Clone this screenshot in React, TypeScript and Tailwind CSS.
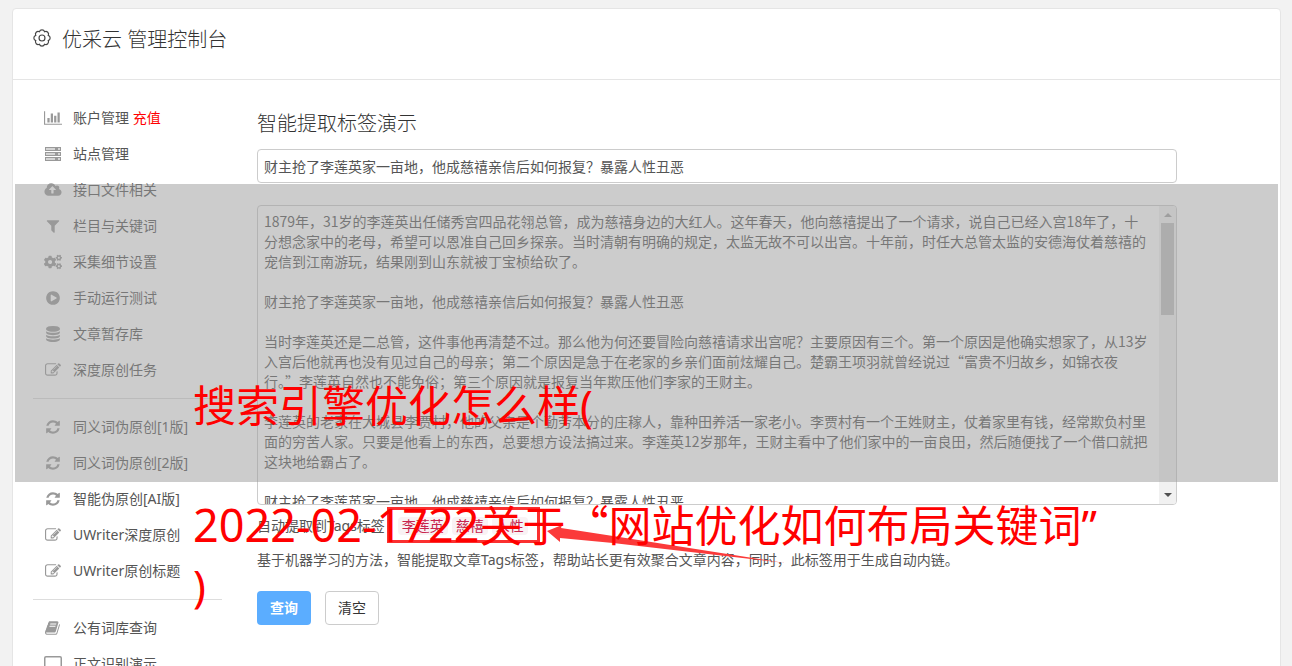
import React from 'react';
import { FaCogs } from 'react-icons/fa';

type IconProps = { box?: string; d: string; className?: string };

const Glyph: React.FC<IconProps> = ({ box = '0 0 1792 1792', d, className = 'w-4' }) => (
  <svg viewBox={box} className={`${className} h-4 shrink-0`} fill="currentColor" aria-hidden="true">
    <path d={d} />
  </svg>
);

const REFRESH = 'M1639 1056q0 5-1 7-64 268-268 434.5t-478 166.5q-146 0-282.5-55t-243.5-157l-129 129q-19 19-45 19t-45-19-19-45v-448q0-26 19-45t45-19h448q26 0 45 19t19 45-19 45l-137 137q71 66 161 102t187 36q134 0 250-65t186-179q11-17 53-117 8-23 30-23h192q13 0 22.5 9.5t9.5 22.5zm25-800v448q0 26-19 45t-45 19h-448q-26 0-45-19t-19-45 19-45l138-138q-148-137-349-137-134 0-250 65t-186 179q-11 17-53 117-8 23-30 23h-199q-13 0-22.5-9.5t-9.5-22.5v-7q65-268 270-434.5t480-166.5q146 0 284 55.5t245 156.5l130-129q19-19 45-19t45 19 19 45z';
const EDIT = 'M888 1184l116-116-152-152-116 116v56h96v96h56zm440-720q-16-16-33 1l-350 350q-17 17-1 33t33-1l350-350q17-17 1-33zm80 594v190q0 119-84.5 203.5t-203.5 84.5h-832q-119 0-203.5-84.5t-84.5-203.5v-832q0-119 84.5-203.5t203.5-84.5h832q63 0 117 25 15 7 18 23 3 17-9 29l-49 49q-14 14-32 8-23-6-45-6h-832q-66 0-113 47t-47 113v832q0 66 47 113t113 47h832q66 0 113-47t47-113v-126q0-13 9-22l64-64q15-15 35-7t20 29zm-96-738l288 288-672 672h-288v-288zm444 132l-92 92-288-288 92-92q28-28 68-28t68 28l152 152q28 28 28 68t-28 68z';
const CHART = 'M640 896v512h-256v-512h256zm384-512v1024h-256v-1024h256zm1024 1152v128h-2048v-1536h128v1408h1920zm-640-896v768h-256v-768h256zm384-384v1152h-256v-1152h256z';
const CLOUD = 'M1280 864q0-14-9-23l-352-352q-9-9-23-9t-23 9l-351 351q-10 12-10 24 0 14 9 23t23 9h224v352q0 13 9.5 22.5t22.5 9.5h192q13 0 22.5-9.5t9.5-22.5v-352h224q13 0 22.5-9.5t9.5-22.5zm640 288q0 159-112.5 271.5t-271.5 112.5h-1088q-185 0-316.5-131.5t-131.5-316.5q0-130 70-240t188-165q-2-30-2-43 0-212 150-362t362-150q156 0 285.5 87t188.5 231q71-62 166-62 106 0 181 75t75 181q0 76-41 138 130 31 213.5 135.5t83.5 238.5z';
const FILTER = 'M1595 295q17 41-14 70l-493 493v742q0 42-39 59-13 5-25 5-27 0-45-19l-256-256q-19-19-19-45v-486l-493-493q-31-29-14-70 17-39 59-39h1280q42 0 59 39z';
const PLAY = 'M896 128q209 0 385.5 103t279.5 279.5 103 385.5-103 385.5-279.5 279.5-385.5 103-385.5-103-279.5-279.5-103-385.5 103-385.5 279.5-279.5 385.5-103zm384 823q32-18 32-55t-32-55l-544-320q-31-19-64-1-32 19-32 56v640q0 37 32 56 16 8 32 8 17 0 32-9z';
const DATABASE = 'M896 768q237 0 443-43t325-127v170q0 69-103 128t-280 93.5-385 34.5-385-34.5-280-93.5-103-128v-170q119 84 325 127t443 43zm0 768q237 0 443-43t325-127v170q0 69-103 128t-280 93.5-385 34.5-385-34.5-280-93.5-103-128v-170q119 84 325 127t443 43zm0-384q237 0 443-43t325-127v170q0 69-103 128t-280 93.5-385 34.5-385-34.5-280-93.5-103-128v-170q119 84 325 127t443 43zm0-1152q208 0 385 34.5t280 93.5 103 128v128q0 69-103 128t-280 93.5-385 34.5-385-34.5-280-93.5-103-128v-128q0-69 103-128t280-93.5 385-34.5z';
const BOOK = 'M1639 478q40 57 18 129l-275 906q-19 64-76.5 107.5t-122.5 43.5h-923q-77 0-148.5-53.5t-99.5-131.5q-24-67-2-127 0-4 3-27t4-37q1-8-3-21.5t-3-19.5q2-11 8-21t16.5-23.5 16.5-23.5q23-38 45-91.5t30-91.5q3-10 .5-30t-.5-28q3-11 17-28t17-23q21-36 42-92t25-90q1-9-2.5-32t.5-28q4-13 22-30.5t22-22.5q19-26 42.5-84.5t27.5-96.5q1-8-3-25.5t-2-26.5q2-8 9-18t18-23 17-21q8-12 16.5-30.5t15-35 16-36 19.5-32 26.5-23.5 36-11.5 47.5 5.5l-1 3q38-9 51-9h761q74 0 114 56t18 130l-274 906q-36 119-71.5 153.5t-128.5 34.5h-869q-27 0-38 15-11 16-1 43 24 70 144 70h923q29 0 56-15.5t35-41.5l300-987q7-22 5-57 38 15 59 43zm-1064 2q-4 13 2 22.5t20 9.5h608q13 0 25.5-9.5t16.5-22.5l21-64q4-13-2-22.5t-20-9.5h-608q-13 0-25.5 9.5t-16.5 22.5zm-83 256q-4 13 2 22.5t20 9.5h608q13 0 25.5-9.5t16.5-22.5l21-64q4-13-2-22.5t-20-9.5h-608q-13 0-25.5 9.5t-16.5 22.5z';

const ServerIcon: React.FC = () => (
  <svg viewBox="0 0 16 14" className="h-3.5 w-4 shrink-0" aria-hidden="true">
    {[0, 5, 10].map((y) => (
      <g key={y}>
        <rect x="0" y={y} width="16" height="4" fill="#999" />
        <rect x="1" y={y + 1} width="9" height="2" fill="#d4d4d4" />
        <rect x="13" y={y + 1} width="2" height="2" fill="#d4d4d4" />
      </g>
    ))}
  </svg>
);

const LaptopIcon: React.FC = () => (
  <svg viewBox="0 0 18 16" className="h-4 w-[18px] shrink-0" fill="none" stroke="currentColor" aria-hidden="true">
    <rect x="0.75" y="0.75" width="16.5" height="11" rx="1.25" strokeWidth="1.5" />
    <path d="M5 15h8" strokeWidth="1.5" />
  </svg>
);

// scalloped gear next to the console title
const GearIcon: React.FC = () => {
  const points = Array.from({ length: 8 }, (_, i) => {
    const a = ((i * 45 + 22.5) * Math.PI) / 180;
    return `${(10 + 7.5 * Math.cos(a)).toFixed(2)} ${(10 + 7.5 * Math.sin(a)).toFixed(2)}`;
  });
  const d = `M${points[0]}${points.slice(1).concat(points[0]).map((p) => `A3 3 0 0 1 ${p}`).join('')}Z`;
  return (
    <svg viewBox="0 0 20 20" className="h-[18px] w-[18px] shrink-0" fill="none" stroke="#444" strokeWidth="1.3" aria-hidden="true">
      <path d={d} />
      <circle cx="10" cy="10" r="3.3" />
    </svg>
  );
};

type MenuItem = { label: string; icon: React.ReactNode; extra?: string };

const menuGroups: MenuItem[][] = [
  [
    { label: '账户管理', icon: <Glyph box="0 0 2048 1792" d={CHART} className="w-[18px]" />, extra: '充值' },
    { label: '站点管理', icon: <ServerIcon /> },
    { label: '接口文件相关', icon: <Glyph box="0 0 1920 1792" d={CLOUD} className="w-[18px]" /> },
    { label: '栏目与关键词', icon: <Glyph d={FILTER} /> },
    { label: '采集细节设置', icon: <FaCogs className="h-4 w-[18px] shrink-0" /> },
    { label: '手动运行测试', icon: <Glyph d={PLAY} /> },
    { label: '文章暂存库', icon: <Glyph d={DATABASE} /> },
    { label: '深度原创任务', icon: <Glyph d={EDIT} /> },
  ],
  [
    { label: '同义词伪原创[1版]', icon: <Glyph d={REFRESH} /> },
    { label: '同义词伪原创[2版]', icon: <Glyph d={REFRESH} /> },
    { label: '智能伪原创[AI版]', icon: <Glyph d={REFRESH} /> },
    { label: 'UWriter深度原创', icon: <Glyph d={EDIT} /> },
    { label: 'UWriter原创标题', icon: <Glyph d={EDIT} /> },
  ],
  [
    { label: '公有词库查询', icon: <Glyph d={BOOK} /> },
    { label: '正文识别演示', icon: <LaptopIcon /> },
  ],
];

const headline = '财主抢了李莲英家一亩地，他成慈禧亲信后如何报复？暴露人性丑恶';

const article = `1879年，31岁的李莲英出任储秀宫四品花翎总管，成为慈禧身边的大红人。这年春天，他向慈禧提出了一个请求，说自己已经入宫18年了，十分想念家中的老母，希望可以恩准自己回乡探亲。当时清朝有明确的规定，太监无故不可以出宫。十年前，时任大总管太监的安德海仗着慈禧的宠信到江南游玩，结果刚到山东就被丁宝桢给砍了。

${headline}

当时李莲英还是二总管，这件事他再清楚不过。那么他为何还要冒险向慈禧请求出宫呢？主要原因有三个。第一个原因是他确实想家了，从13岁入宫后他就再也没有见过自己的母亲；第二个原因是急于在老家的乡亲们面前炫耀自己。楚霸王项羽就曾经说过“富贵不归故乡，如锦衣夜行。”李莲英自然也不能免俗；第三个原因就是报复当年欺压他们李家的王财主。

李莲英的老家在大城县李贾村，他的父亲是个勤劳本分的庄稼人，靠种田养活一家老小。李贾村有一个王姓财主，仗着家里有钱，经常欺负村里面的穷苦人家。只要是他看上的东西，总要想方设法搞过来。李莲英12岁那年，王财主看中了他们家中的一亩良田，然后随便找了一个借口就把这块地给霸占了。

${headline}`;

const tags = ['李莲英', '慈禧', '人性'];

const Sidebar: React.FC = () => (
  <nav className="w-[189px] shrink-0">
    {menuGroups.map((group, index) => (
      <ul key={index} className={index > 0 ? 'mt-[10px] border-t border-[#ddd] pt-[10px]' : ''}>
        {group.map((item) => (
          <li key={item.label}>
            <a href="#" className="flex h-9 items-center gap-[11px] pl-[11px] whitespace-nowrap text-[#555]">
              <span className="flex w-[18px] justify-center text-[#999]">{item.icon}</span>
              <span>
                {item.label}
                {item.extra && <span className="text-[#f00]"> {item.extra}</span>}
              </span>
            </a>
          </li>
        ))}
      </ul>
    ))}
  </nav>
);

const ArticleBox: React.FC = () => (
  <div className="mt-[22px] flex h-[300px] overflow-hidden rounded border border-[#ccc]">
    <textarea
      aria-label="文章内容"
      defaultValue={article}
      className="block h-full min-w-0 flex-1 resize-none overflow-hidden pt-[5px] pr-2 pl-1.5 font-['Noto_Sans_CJK_SC',sans-serif] leading-5 text-[#555] outline-none"
    />
    <div className="flex w-[17px] shrink-0 flex-col items-center justify-between bg-[#f1f1f1] pt-[7px] pb-[7px]" aria-hidden="true">
      <div className="flex flex-col items-center gap-1.5">
        <span className="border-x-4 border-b-4 border-transparent border-b-[#a3a3a3]" />
        <span className="h-[92px] w-[13px] bg-[#c1c1c1]" />
      </div>
      <span className="border-x-4 border-t-4 border-transparent border-t-[#505050]" />
    </div>
  </div>
);

const ExtractDemo: React.FC = () => (
  <main className="w-[920px] min-w-0">
    <h2 className="mt-[9px] text-xl leading-[30px] font-light text-[#333]">智能提取标签演示</h2>
    <input
      type="text"
      aria-label="标题"
      defaultValue={headline}
      className="mt-[10px] block h-[34px] w-full rounded border border-[#ccc] bg-white px-1.5 text-[#555] outline-none"
    />
    <ArticleBox />
    <div className="relative mt-[11px] flex h-5 items-center gap-1 text-[#555]">
      <span className="mr-[9px]">自动提取到Tags标签</span>
      {tags.map((tag) => (
        <code key={tag} className="rounded bg-[#f9f2f4] px-1 py-px font-[inherit] text-sm leading-4 text-[#c7254e]">{tag}</code>
      ))}
      <svg viewBox="0 0 530 70" className="absolute -top-[9px] left-[130px] h-[70px] w-[530px]" fill="none" aria-hidden="true">
        <rect x="1.5" y="1.5" width="150" height="33" stroke="#fb3030" strokeWidth="3" />
        <path d="M160 24L175 18 174 21 226 29 398 56 226 36 173 31 173 35Z" fill="#fb3a3a" />
      </svg>
    </div>
    <p className="mt-[14px] leading-5 text-[#555]">基于机器学习的方法，智能提取文章Tags标签，帮助站长更有效聚合文章内容，同时，此标签用于生成自动内链。</p>
    <div className="mt-[21px] flex gap-3.5">
      <button type="button" className="h-[34px] w-[54px] rounded bg-[#5badff] font-bold text-white">查询</button>
      <button type="button" className="h-[34px] w-[54px] rounded border border-[#ccc] bg-white text-[#333]">清空</button>
    </div>
  </main>
);

const App: React.FC = () => {
  return (
    <div className="relative h-screen overflow-hidden bg-[#f2f2f2] pt-2 pr-[11px] pl-3 font-['Noto_Sans','Noto_Sans_CJK_SC',sans-serif] text-sm">
      <div className="min-h-screen rounded-t border border-[#e5e5e5] bg-white">
        <header className="flex h-[71px] items-start gap-[11px] border-b border-[#e5e5e5] pt-4 pl-5">
          <span className="pt-1"><GearIcon /></span>
          <h1 className="text-xl leading-[30px] font-light text-[#333]">优采云 管理控制台</h1>
        </header>
        <div className="flex gap-[35px] pt-5 pl-5">
          <Sidebar />
          <ExtractDemo />
        </div>
      </div>

      {/* caption banner lying over the page */}
      <div className="pointer-events-none absolute top-[184px] right-[14px] left-[15px] h-[298px] bg-[#999]/50">
        <p className="pt-[192px] pl-[178px] text-[43px] leading-[60px] whitespace-pre-wrap text-[#f00]">
          {'搜索引擎优化怎么样(\n\n'}
          <span className="text-[45px] leading-none">2022-02-1722</span>
          关于
          <span className="font-['Noto_Sans_CJK_SC',sans-serif] leading-none">“</span>
          {'网站优化如何布局关键词”\n)'}
        </p>
      </div>
    </div>
  );
};

export default App;
